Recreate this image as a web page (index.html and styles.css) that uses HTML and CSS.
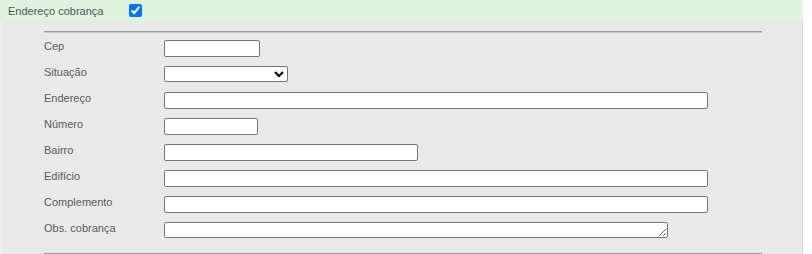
FILE: index.html
```html
<!DOCTYPE html>
<html lang="pt">
<head>
  <meta charset="UTF-8" />
  <title>Endereço cobrança</title>
  <link rel="stylesheet" href="styles.css">
</head>
<body>
  <div class="box">
    <div class="head">
      <span class="head-title">Endereço cobrança</span>
      <input type="checkbox" class="head-check" checked />
    </div>

    <div class="panel">
      <hr class="rule" />
      <div class="rows">
        <div class="row">
          <label class="lbl">Cep</label>
          <input type="text" class="fld w-cep" />
        </div>
        <div class="row">
          <label class="lbl">Situação</label>
          <select class="fld sel"><option></option></select>
        </div>
        <div class="row">
          <label class="lbl">Endereço</label>
          <input type="text" class="fld w-long" />
        </div>
        <div class="row">
          <label class="lbl">Número</label>
          <input type="text" class="fld w-num" />
        </div>
        <div class="row">
          <label class="lbl">Bairro</label>
          <input type="text" class="fld w-mid" />
        </div>
        <div class="row">
          <label class="lbl">Edifício</label>
          <input type="text" class="fld w-long" />
        </div>
        <div class="row">
          <label class="lbl">Complemento</label>
          <input type="text" class="fld w-long" />
        </div>
        <div class="row">
          <label class="lbl">Obs. cobrança</label>
          <textarea class="fld obs" rows="1"></textarea>
        </div>
      </div>
      <hr class="rule" />
    </div>
  </div>
</body>
</html>
```

FILE: styles.css
```css
* {
  box-sizing: border-box;
}

body {
  margin: 0;
  background: #ffffff;
  font-family: 'Liberation Sans', Arial, sans-serif;
  font-size: 11px;
}

.box {
  width: 803px;
}

.head {
  height: 21px;
  background: #dff3de;
  display: flex;
  align-items: center;
  padding-left: 8px;
  color: #555555;
}

.head-title {
  width: 121px;
}

.head-check {
  margin: 0;
  width: 13px;
  height: 13px;
  accent-color: #0075ff;
}

.panel {
  background: #e9e9e9;
  border-left: 3px solid #efefef;
  border-right: 1px solid #d6d6d6;
  padding: 10px 40px 0 41px;
  height: 233px;
  overflow: hidden;
}

.rule {
  margin: 0;
  border: 0;
  border-top: 1px solid #9a9a9a;
  border-bottom: 1px solid #c8c8c8;
  height: 2px;
}

.rows {
  padding: 3px 0 9px;
}

.row {
  display: flex;
  align-items: flex-start;
  height: 26px;
  padding-top: 4px;
}

.lbl {
  width: 120px;
  color: #5e5a56;
  line-height: 13px;
  padding-top: 0;
}

.fld {
  margin: 0;
  height: 17px;
  border: 1px solid #767676;
  border-radius: 2px;
  background: #ffffff;
  font: 11px 'Liberation Sans', Arial, sans-serif;
}

.sel {
  width: 124px;
  height: 16px;
  padding: 0;
}

.w-cep { width: 96px; }
.w-num { width: 94px; }
.w-mid { width: 254px; }
.w-long { width: 544px; }

.obs {
  width: 504px;
  height: 16px;
  resize: both;
  padding: 0 2px;
}
```
